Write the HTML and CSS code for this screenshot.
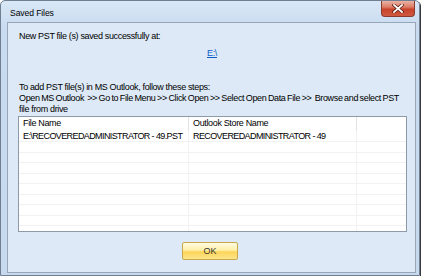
FILE: index.html
```html
<!DOCTYPE html>
<html>
<head>
<meta charset="utf-8">
<link rel="stylesheet" href="styles.css">
</head>
<body>
<div class="window">
  <div class="titlebar">
    <span class="title">Saved Files</span>
    <div class="close">
      <svg width="12" height="9" viewBox="0 0 12 9"><path d="M2 1 L10 8 M10 1 L2 8" stroke="#5a1a10" stroke-width="3.2" stroke-linecap="square"/><path d="M2 1 L10 8 M10 1 L2 8" stroke="#ffffff" stroke-width="1.8" stroke-linecap="square"/></svg>
    </div>
  </div>
  <div class="client">
    <div class="msg">New PST file (s) saved successfully at:</div>
    <div class="pathrow"><a class="path">E:\</a></div>
    <div class="steps">
      <div>To add PST file(s) in MS Outlook, follow these steps:</div>
      <div class="long">Open MS Outlook &nbsp;&gt;&gt; Go to File Menu &gt;&gt; Click Open &gt;&gt; Select Open Data File &gt;&gt; &nbsp;Browse and select PST</div>
      <div>file from drive</div>
    </div>
    <div class="list">
      <div class="row head">
        <div class="c1">File Name</div>
        <div class="c2">Outlook Store Name</div>
        <div class="c3"></div>
      </div>
      <div class="row first">
        <div class="c1">E:\RECOVEREDADMINISTRATOR - 49.PST</div>
        <div class="c2">RECOVEREDADMINISTRATOR - 49</div>
        <div class="c3"></div>
      </div>
      <div class="row"><div class="c1"></div><div class="c2"></div><div class="c3"></div></div>
      <div class="row"><div class="c1"></div><div class="c2"></div><div class="c3"></div></div>
      <div class="row"><div class="c1"></div><div class="c2"></div><div class="c3"></div></div>
      <div class="row"><div class="c1"></div><div class="c2"></div><div class="c3"></div></div>
      <div class="row"><div class="c1"></div><div class="c2"></div><div class="c3"></div></div>
      <div class="row"><div class="c1"></div><div class="c2"></div><div class="c3"></div></div>
      <div class="row"><div class="c1"></div><div class="c2"></div><div class="c3"></div></div>
      <div class="row"><div class="c1"></div><div class="c2"></div><div class="c3"></div></div>
      <div class="row"><div class="c1"></div><div class="c2"></div><div class="c3"></div></div>
    </div>
    <div class="actions"><div class="ok">OK</div></div>
  </div>
</div>
</body>
</html>
```
FILE: styles.css
```css
html, body {
  margin: 0;
  padding: 0;
  background: #ffffff;
}
body {
  font-family: "Liberation Sans", Arial, sans-serif;
  font-size: 9px;
  color: #000;
}
.window {
  box-sizing: border-box;
  width: 420px;
  height: 276px;
  border: 1px solid #6f7e90;
  border-radius: 5px 5px 0 0;
  background: linear-gradient(180deg, #d9e7f6 0%, #c9dbf0 10%, #c6d9ef 100%);
  padding: 0 3px 2px 6px;
  display: flex;
  flex-direction: column;
  box-shadow: 1px 1px 0 #3a3a3a;
}
.titlebar {
  height: 21px;
  display: flex;
  align-items: flex-start;
  justify-content: space-between;
  flex: none;
}
.title {
  font-size: 8.6px;
  letter-spacing: -0.1px;
  padding: 7px 0 0 3px;
  color: #000;
}
.close {
  width: 34px;
  height: 16px;
  box-sizing: border-box;
  border: 1px solid #8a3b2e;
  border-top: none;
  border-radius: 0 0 4px 4px;
  background: linear-gradient(180deg, #eab2a4 0%, #dc7d68 40%, #c8432b 55%, #cf5a3f 100%);
  display: flex;
  align-items: center;
  justify-content: center;
  margin-right: 1px;
}
.close svg { display: block; }
.client {
  flex: 1;
  border: 1px solid #98a6b8;
  background: #dde9f6;
  display: flex;
  flex-direction: column;
  letter-spacing: -0.35px;
}
.msg {
  line-height: 11px;
  padding: 8px 0 0 11px;
}
.pathrow {
  line-height: 11px;
  margin-top: 6px;
  padding-left: 199px;
}
.path {
  color: #0b5fc9;
  text-decoration: underline;
}
.steps {
  margin-top: 23px;
  padding-left: 11px;
  line-height: 11px;
  white-space: nowrap;
}
.steps .long {
  word-spacing: -0.6px;
}
.list {
  margin: 1px 0 0 10px;
  width: 389px;
  height: 116px;
  box-sizing: border-box;
  border: 1px solid #8e9aa8;
  background: #fff;
  overflow: hidden;
  flex: none;
  letter-spacing: -0.6px;
}
.row {
  display: flex;
  height: 10.5px;
  line-height: 10.5px;
  border-bottom: 1px solid #f2f2f2;
  box-sizing: border-box;
}
.row.head {
  height: 14px;
  line-height: 13px;
  border-bottom: none;
  letter-spacing: -0.35px;
}
.row.first {
  height: 11px;
  line-height: 11px;
}
.row div {
  box-sizing: border-box;
  padding-left: 4px;
  white-space: nowrap;
  overflow: hidden;
}
.c1 { width: 170px; border-right: 1px solid #f2f2f2; }
.c2 { width: 168px; border-right: 1px solid #f2f2f2; }
.c3 { flex: 1; }
.head .c1, .head .c2 { border-right: 1px solid #e3e3e3; }
.actions {
  margin-top: 10px;
  padding-left: 174px;
}
.ok {
  width: 56px;
  height: 18px;
  box-sizing: border-box;
  border: 1px solid #c9a84a;
  border-radius: 2px;
  background: linear-gradient(180deg, #fffbe0 0%, #fff0a8 45%, #fcd558 55%, #fde58c 100%);
  text-align: center;
  line-height: 16px;
  color: #333;
  letter-spacing: 0;
  font-size: 9px;
}
```
